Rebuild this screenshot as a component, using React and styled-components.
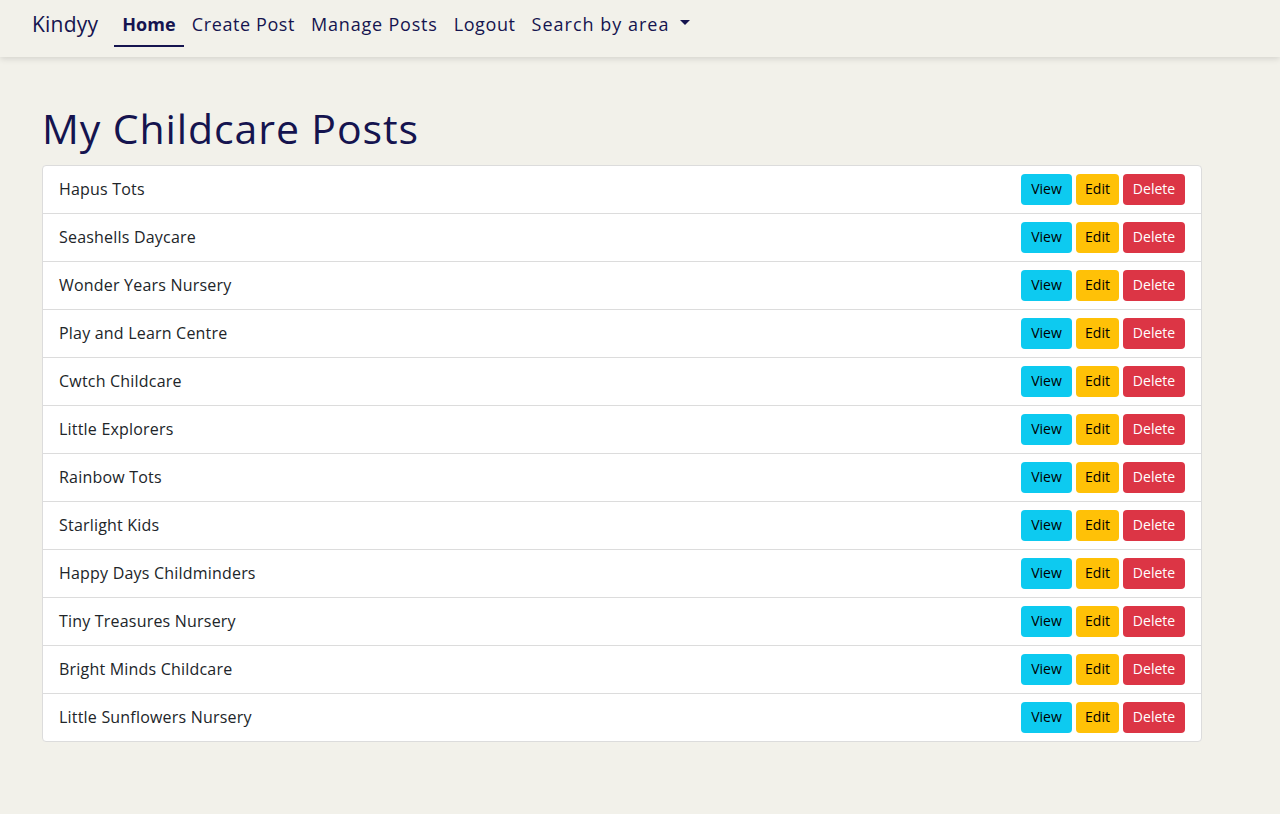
import React from "react";
import styled, { createGlobalStyle } from "styled-components";

const Global = createGlobalStyle`
  * { box-sizing: border-box; }
  html, body { margin: 0; padding: 0; }
  body {
    background: #f2f1ea;
    font-family: "Open Sans", "Liberation Sans", sans-serif;
    color: #212529;
    font-size: 16px;
    line-height: 1.5;
  }
`;

const Page = styled.div`
  min-height: 814px;
  background: #f2f1ea;
`;

const Navbar = styled.nav`
  height: 57px;
  display: flex;
  align-items: flex-start;
  padding: 0 32px;
  background: #f2f1ea;
  box-shadow: 0 2px 6px rgba(0, 0, 0, 0.12);
  position: relative;
  z-index: 1;
`;

const Brand = styled.a`
  font-size: 21px;
  line-height: 24px;
  padding-top: 12px;
  color: #15144f;
  margin-right: 16px;
  text-decoration: none;
  letter-spacing: 0.2px;
`;

const NavList = styled.ul`
  display: flex;
  list-style: none;
  margin: 0;
  padding: 0;
`;

const NavLink = styled.a`
  display: flex;
  align-items: center;
  gap: 11px;
  padding: 12px 8px 9px;
  line-height: 24px;
  font-size: 18px;
  letter-spacing: ${(p) => p.$ls}px;
  color: #15144f;
  text-decoration: none;
  font-weight: ${(p) => (p.$active ? 700 : 400)};
  border-bottom: 2px solid ${(p) => (p.$active ? "#15144f" : "transparent")};
`;

const Caret = styled.span`
  display: inline-block;
  width: 0;
  height: 0;
  border-left: 5px solid transparent;
  border-right: 5px solid transparent;
  border-top: 5px solid #15144f;
  margin-top: -3px;
`;

const Main = styled.main`
  padding: 47px 78px 0 42px;
`;

const Title = styled.h1`
  margin: 0 0 13px;
  font-size: 41px;
  font-weight: 400;
  line-height: 48px;
  letter-spacing: 0.9px;
  color: #15144f;
`;

const Card = styled.ul`
  list-style: none;
  margin: 0;
  padding: 0;
  background: #fff;
  border: 1px solid #dcdcdc;
  border-radius: 4px;
  overflow: hidden;
`;

const Row = styled.li`
  height: ${(p) => (p.$first ? 47 : 48)}px;
  display: flex;
  align-items: center;
  justify-content: space-between;
  padding: 0 16px;
  border-top: ${(p) => (p.$first ? "none" : "1px solid #dcdcdc")};
  font-size: 16px;
  color: #212529;
`;

const Name = styled.span`
  letter-spacing: 0.2px;
  margin-top: -1px;
`;

const Actions = styled.div`
  display: flex;
  gap: 4px;
`;

const Btn = styled.button`
  height: 31px;
  width: ${(p) => p.$w}px;
  border: none;
  border-radius: 4px;
  font-family: inherit;
  font-size: 14px;
  font-weight: 500;
  padding: 0 0 2px;
  cursor: pointer;
  background: ${(p) => p.$bg};
  color: ${(p) => p.$fg};
`;

const posts = [
  "Hapus Tots",
  "Seashells Daycare",
  "Wonder Years Nursery",
  "Play and Learn Centre",
  "Cwtch Childcare",
  "Little Explorers",
  "Rainbow Tots",
  "Starlight Kids",
  "Happy Days Childminders",
  "Tiny Treasures Nursery",
  "Bright Minds Childcare",
  "Little Sunflowers Nursery",
];

export default function App() {
  return (
    <Page>
      <Global />
      <Navbar>
        <Brand href="#">Kindyy</Brand>
        <NavList>
          <li><NavLink href="#" $active $ls={0.1}>Home</NavLink></li>
          <li><NavLink href="#" $ls={0.6}>Create Post</NavLink></li>
          <li><NavLink href="#" $ls={0.8}>Manage Posts</NavLink></li>
          <li><NavLink href="#" $ls={0.6}>Logout</NavLink></li>
          <li><NavLink href="#" $ls={1.0}>Search by area <Caret /></NavLink></li>
        </NavList>
      </Navbar>
      <Main>
        <Title>My Childcare Posts</Title>
        <Card>
          {posts.map((p, i) => (
            <Row key={p} $first={i === 0}>
              <Name>{p}</Name>
              <Actions>
                <Btn $w={51} $bg="#0dcaf0" $fg="#000">View</Btn>
                <Btn $w={43} $bg="#ffc107" $fg="#000">Edit</Btn>
                <Btn $w={62} $bg="#dc3545" $fg="#fff">Delete</Btn>
              </Actions>
            </Row>
          ))}
        </Card>
      </Main>
    </Page>
  );
}
